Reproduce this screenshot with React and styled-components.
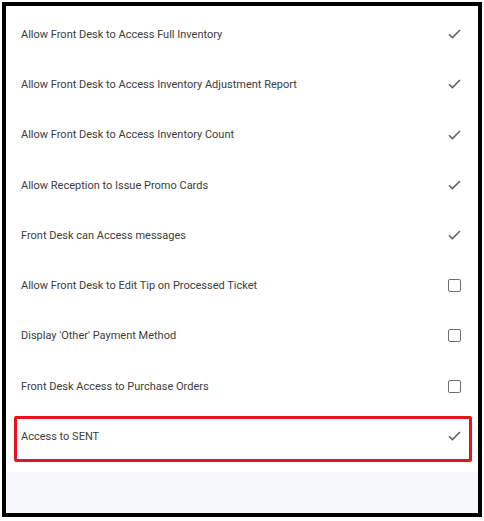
import React from 'react';
import styled, { createGlobalStyle } from 'styled-components';

const GlobalStyle = createGlobalStyle`
    html, body {
        margin: 0;
        padding: 0;
        background: #ffffff;
    }
    body {
        font-family: Roboto, "Liberation Sans", Arial, sans-serif;
    }
`

const settings = [
    { label: 'Allow Front Desk to Access Full Inventory', on: true },
    { label: 'Allow Front Desk to Access Inventory Adjustment Report', on: true },
    { label: 'Allow Front Desk to Access Inventory Count', on: true },
    { label: 'Allow Reception to Issue Promo Cards', on: true },
    { label: 'Front Desk can Access messages', on: true },
    { label: 'Allow Front Desk to Edit Tip on Processed Ticket', on: false },
    { label: "Display 'Other' Payment Method", on: false },
    { label: 'Front Desk Access to Purchase Orders', on: false },
];

const Check = () => (
    <svg width="13" height="10" viewBox="0 0 13 10">
        <path d="M1 5.2 L4.4 8.6 L12 1" fill="none" stroke="#5f6368" strokeWidth="1.6" />
    </svg>
);

const Control = ({ on }) => (on ? <Check /> : <Box />);

function App() {
    return (
        <>
            <GlobalStyle />
            <Frame>
                <List>
                    {settings.map((s) => (
                        <Row key={s.label}>
                            <Label>{s.label}</Label>
                            <Control on={s.on} />
                        </Row>
                    ))}
                    <Highlight>
                        <Label>Access to SENT</Label>
                        <Check />
                    </Highlight>
                </List>
                <Footer />
            </Frame>
        </>
    );
}

export default App;

const Frame = styled.div`
    margin: 2px;
    width: 480px;
    height: 515px;
    box-sizing: border-box;
    border: 4px solid #000;
    display: flex;
    flex-direction: column;
    background: #fff;
`

const List = styled.div`
    padding: 3px 0 10px;
    display: flex;
    flex-direction: column;
`

const Row = styled.div`
    height: 50.3px;
    padding: 0 17px 0 15px;
    display: flex;
    align-items: center;
    justify-content: space-between;
`

const Highlight = styled.div`
    height: 46px;
    margin: 5px 6px 0 8px;
    box-sizing: border-box;
    border: 3px solid #e8141c;
    border-radius: 2px;
    padding: 0 8px 6px 4px;
    display: flex;
    align-items: center;
    justify-content: space-between;
`

const Label = styled.span`
    font-size: 11px;
    color: #3c3c3c;
`

const Box = styled.span`
    width: 13px;
    height: 13px;
    box-sizing: border-box;
    border: 1.5px solid #6b6f73;
    border-radius: 2px;
`

const Footer = styled.div`
    flex: 1;
    background: #f7f8fc;
`
